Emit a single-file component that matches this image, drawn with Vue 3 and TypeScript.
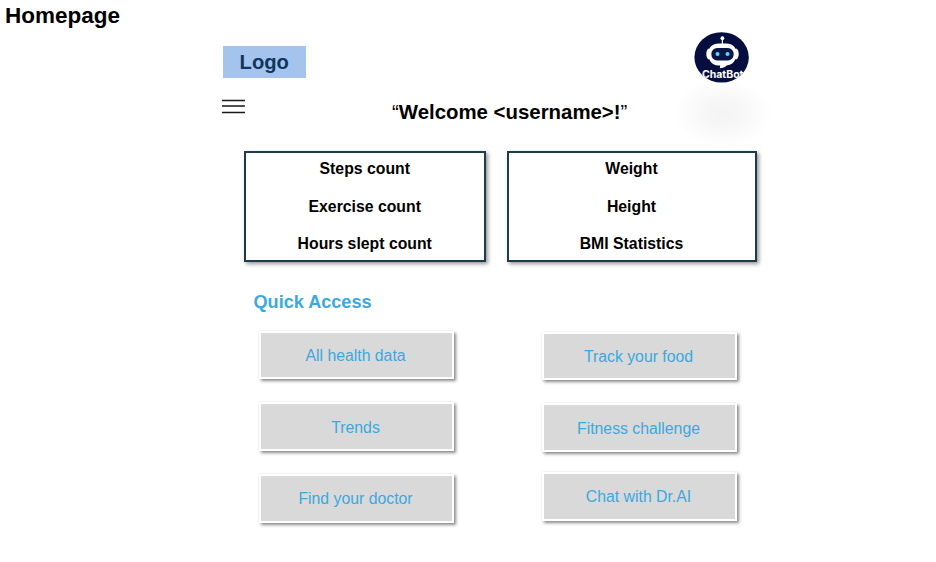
<script setup lang="ts">
interface QuickColumn {
  side: string
  items: string[]
}

const summaries: { side: string; lines: string[] }[] = [
  { side: 'activity', lines: ['Steps count', 'Exercise count', 'Hours slept count'] },
  { side: 'body', lines: ['Weight', 'Height', 'BMI Statistics'] },
]

const columns: QuickColumn[] = [
  { side: 'left', items: ['All health data', 'Trends', 'Find your doctor'] },
  { side: 'right', items: ['Track your food', 'Fitness challenge', 'Chat with Dr.AI'] },
]
</script>

<template>
  <div class="page">
    <h1 class="title">Homepage</h1>
    <main class="content">
      <header class="top">
        <div class="logo">Logo</div>
        <button class="chatbot" aria-label="ChatBot">
          <svg width="56" height="54" viewBox="0 0 56 54">
            <defs>
              <clipPath id="disc"><ellipse cx="27.6" cy="26.4" rx="27.2" ry="25.2" /></clipPath>
            </defs>
            <ellipse cx="27.6" cy="26.4" rx="27.2" ry="25.2" fill="#060e40" />
            <g fill="#fff">
              <circle cx="28.4" cy="7.2" r="1.9" />
              <rect x="27.8" y="8" width="1.2" height="6" />
              <ellipse cx="15" cy="23" rx="2.7" ry="5.4" />
              <ellipse cx="42" cy="23" rx="2.7" ry="5.4" />
              <path d="M25 12.4h7c7.3 0 10.4 4.2 10.4 10.4s-3.4 11.2-9.8 11.7c-1.6 1.8-4 2.6-6.8 2.8l.4-2.8h-1.8c-6.6 0-10-5.4-10-11.7s3.6-10.4 10.6-10.4z" />
            </g>
            <rect x="17.4" y="17" width="22.2" height="12.4" rx="5.6" fill="#0b1647" />
            <circle cx="23.5" cy="23" r="2" fill="#50dff0" />
            <circle cx="33.5" cy="23" r="2" fill="#50dff0" />
            <text class="bot-name" x="28.7" y="46.9" text-anchor="middle" textLength="41.5" lengthAdjust="spacingAndGlyphs" clip-path="url(#disc)">ChatBot</text>
          </svg>
        </button>
      </header>
      <div class="greeting">
        <svg class="menu" width="24" height="16" viewBox="0 0 24 16">
          <path d="M0 2.5h23M0 8h23M0 14.5h23" stroke="#18191c" stroke-width="1.4" />
        </svg>
        <p class="welcome"><span class="quote">“</span>Welcome &lt;username&gt;!<span class="quote">”</span></p>
        <div class="glow"></div>
      </div>
      <section class="summary">
        <div v-for="card in summaries" :key="card.side" class="card" :class="card.side">
          <p v-for="line in card.lines" :key="line">{{ line }}</p>
        </div>
      </section>
      <h2 class="quick-title">Quick Access</h2>
      <nav class="quick">
        <div v-for="column in columns" :key="column.side" class="column" :class="column.side">
          <button v-for="item in column.items" :key="item" class="tile">{{ item }}</button>
        </div>
      </nav>
    </main>
  </div>
</template>

<style>
body {
  margin: 0;
  background: #fff;
}
</style>

<style scoped>
.page {
  box-sizing: border-box;
  width: 936px;
  height: 562px;
  overflow: hidden;
  background: #fff;
  font-family: "Liberation Sans", Arial, sans-serif;
  color: #000;
}
h1, h2, p {
  margin: 0;
}
button {
  padding: 0;
  font: inherit;
}
.title {
  height: 31px;
  padding-left: 5px;
  font-size: 22.5px;
  line-height: 31px;
}
.content {
  width: 560px;
  margin-left: 222px;
}
.top {
  display: flex;
  height: 60px;
}
.logo {
  width: 83.5px;
  height: 32.5px;
  margin: 14.5px 0 0 0.5px;
  background: #a4c4ee;
  color: #103660;
  font-size: 20.2px;
  font-weight: 700;
  line-height: 33px;
  text-align: center;
}
.chatbot {
  width: 56px;
  height: 54px;
  margin-left: 388px;
  border: 0;
  background: none;
}
.chatbot svg {
  display: block;
}
.bot-name {
  fill: #fff;
  font-family: Inter, "Open Sans", sans-serif;
  font-size: 10.4px;
  font-weight: 700;
}
.greeting {
  display: flex;
  height: 60px;
}
.menu {
  flex: none;
  margin-top: 7px;
}
.welcome {
  flex: none;
  width: 235px;
  margin: 8px 0 0 146px;
  font-size: 20.4px;
  font-weight: 700;
  line-height: 26px;
  white-space: nowrap;
}
.quote {
  font-weight: 400;
}
.glow {
  flex: none;
  width: 100px;
  height: 72px;
  margin: -14px 0 0 46px;
  background: radial-gradient(closest-side, rgba(0, 0, 0, 0.045), rgba(0, 0, 0, 0.032) 40%, rgba(0, 0, 0, 0.012) 75%, transparent);
}
.summary {
  display: flex;
  gap: 21px;
  margin-left: 21.5px;
}
.card {
  box-sizing: border-box;
  height: 111px;
  border: 2px solid #193d4b;
  background: #fff;
  box-shadow: 2px 2px 4px rgba(0, 0, 0, 0.42);
  font-size: 15.8px;
  font-weight: 700;
  line-height: 37.6px;
  text-align: center;
}
.card p:first-child {
  margin-top: -2.8px;
}
.activity {
  width: 242.5px;
}
.body {
  width: 250px;
  padding-right: 1px;
}
.quick-title {
  margin: 27.8px 0 0 31.5px;
  color: #3aa9df;
  font-size: 18.1px;
  line-height: 24px;
}
.quick {
  display: flex;
  gap: 88px;
  margin: 17px 0 0 37px;
}
.column {
  display: flex;
  flex-direction: column;
  gap: 23px;
}
.column.right {
  padding-top: 1px;
}
.column.right .tile:last-child {
  margin-top: -3px;
}
.tile {
  box-sizing: border-box;
  width: 195px;
  height: 48.6px;
  padding: 2px 2px 0 0;
  border: 2px solid #fff;
  background: #d9d9d9;
  box-shadow: 2px 2px 3px rgba(0, 0, 0, 0.45), 0 0 2px rgba(0, 0, 0, 0.08);
  color: #3aa9df;
  font-size: 15.8px;
}
</style>
